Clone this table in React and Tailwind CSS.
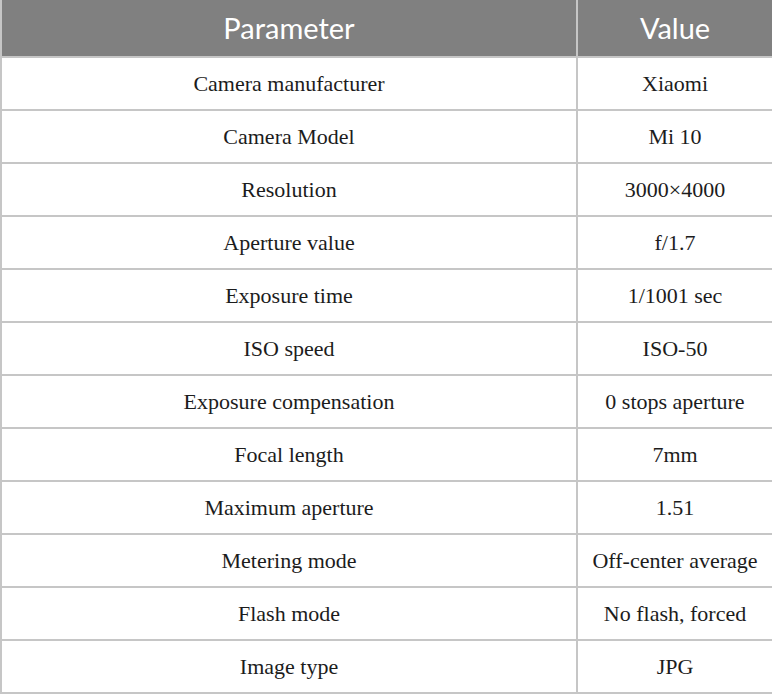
import React from 'react';

const rows = [
  ['Camera manufacturer', 'Xiaomi'],
  ['Camera Model', 'Mi 10'],
  ['Resolution', '3000×4000'],
  ['Aperture value', 'f/1.7'],
  ['Exposure time', '1/1001 sec'],
  ['ISO speed', 'ISO-50'],
  ['Exposure compensation', '0 stops aperture'],
  ['Focal length', '7mm'],
  ['Maximum aperture', '1.51'],
  ['Metering mode', 'Off-center average'],
  ['Flash mode', 'No flash, forced'],
  ['Image type', 'JPG'],
];

const App = () => {
  return (
    <div className="w-[772px] h-[696px] bg-white">
      <table className="w-[772px] border-collapse table-fixed">
        <colgroup>
          <col className="w-[576px]" />
          <col className="w-[196px]" />
        </colgroup>
        <thead>
          <tr className="h-[57px] bg-[#808080] text-white font-['Lato',sans-serif] text-[29px]">
            <th className="font-normal border-2 border-[#c6c6c6] border-t-0">Parameter</th>
            <th className="font-normal border-2 border-[#c6c6c6] border-t-0">Value</th>
          </tr>
        </thead>
        <tbody className="font-['Liberation_Serif',serif] text-[22px] text-[#1c1c1c]">
          {rows.map((row, i) => (
            <tr key={i} className="h-[53px]">
              <td className="text-center border-2 border-[#c6c6c6]">{row[0]}</td>
              <td className="text-center border-2 border-[#c6c6c6]">{row[1]}</td>
            </tr>
          ))}
        </tbody>
      </table>
    </div>
  );
};

export default App;
